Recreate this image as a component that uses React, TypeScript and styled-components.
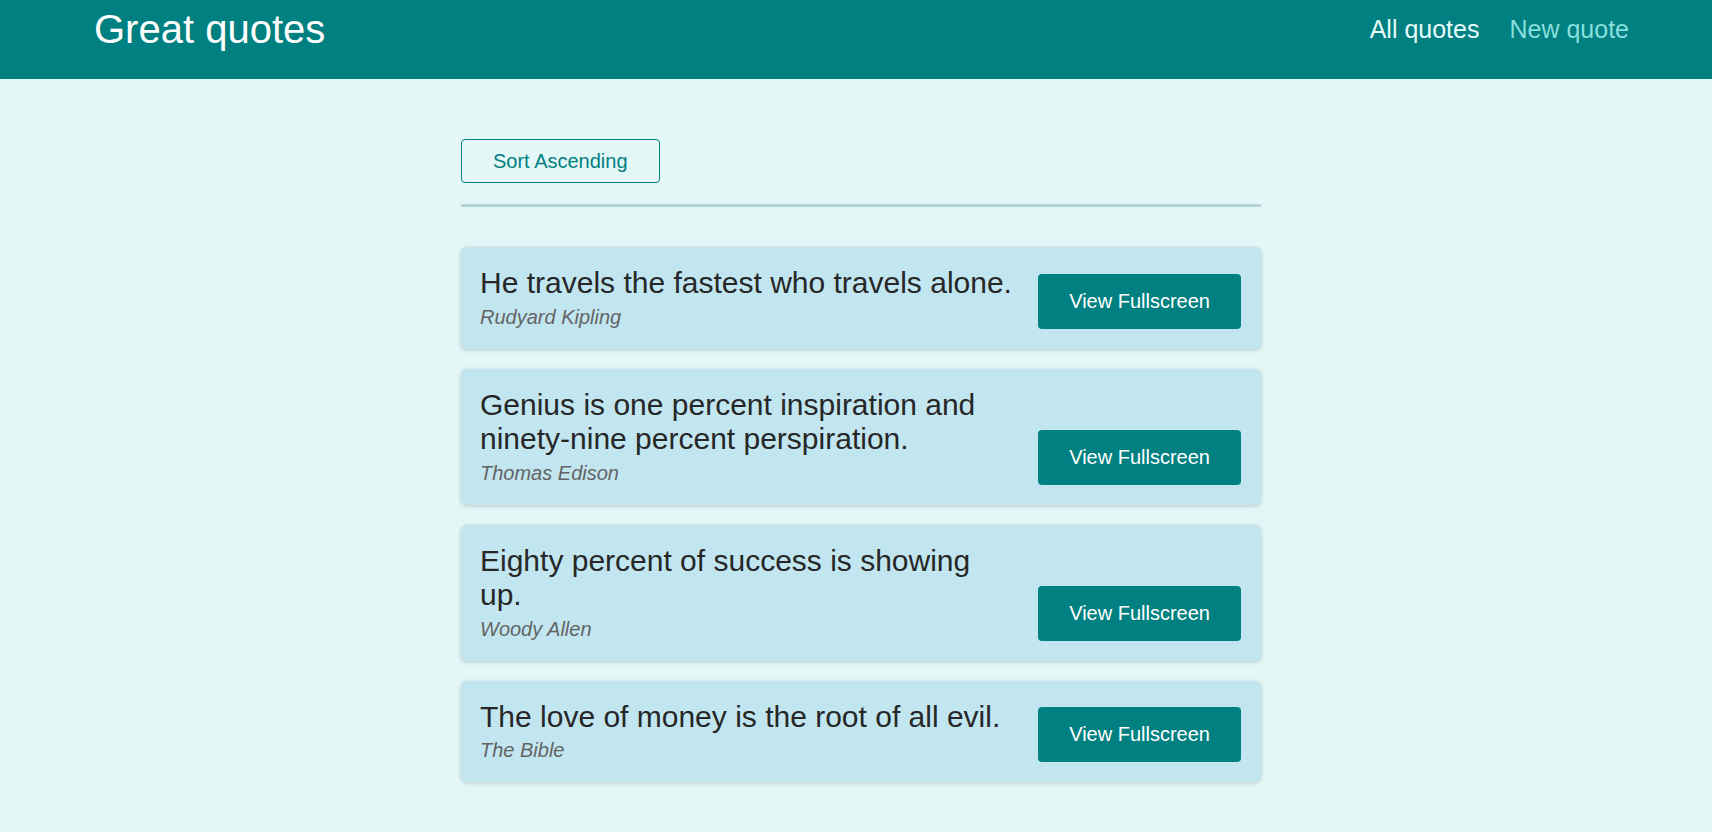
import React from "react";
import styled, { createGlobalStyle } from "styled-components";

const GlobalStyle = createGlobalStyle`
  * { box-sizing: border-box; }
  html, body { margin: 0; padding: 0; }
  body {
    background: #e4f7f7;
    font-family: "Liberation Sans", Arial, sans-serif;
    min-height: 832px;
  }
`;

const Header = styled.header`
  height: 79px;
  background: #008080;
  display: flex;
  justify-content: space-between;
  align-items: flex-start;
  padding: 6px 83px 0 94px;
`;

const Logo = styled.div`
  font-size: 40px;
  line-height: 46px;
  color: #ffffff;
`;

const Nav = styled.nav`
  display: flex;
  gap: 30px;
  margin-top: 9px;
`;

const NavLink = styled.a<{ $active?: boolean }>`
  font-size: 25px;
  line-height: 29px;
  text-decoration: none;
  color: ${(p) => (p.$active ? "#e6fcfc" : "#88dfdf")};
  cursor: pointer;
`;

const Main = styled.main`
  width: 810px;
  margin: 0 auto;
  padding: 60px 0 49px 10px;
  display: flex;
  flex-direction: column;
`;

const Sorting = styled.div`
  padding-bottom: 21px;
  border-bottom: 3px solid #b2d4d6;
  margin-bottom: 40px;
`;

const SortButton = styled.button`
  font-family: inherit;
  font-size: 20px;
  line-height: 23px;
  padding: 9.5px 31px;
  background: transparent;
  color: #008080;
  border: 1px solid #008080;
  border-radius: 4px;
  cursor: pointer;
`;

const List = styled.ul`
  list-style: none;
  margin: 0;
  padding: 0;
  display: flex;
  flex-direction: column;
  gap: 20px;
`;

const Card = styled.li`
  display: flex;
  align-items: flex-end;
  gap: 23px;
  background: #c2e6f0;
  border-radius: 6px;
  box-shadow: 0 1px 4px rgba(0, 0, 0, 0.2);
  padding: 19px 20px 20px 19px;
`;

const Figure = styled.figure`
  flex: 1;
  min-width: 0;
  margin: 0;
`;

const Quote = styled.blockquote`
  margin: 0 0 5px 0;
  font-size: 30px;
  line-height: 34.5px;
  color: #272727;
`;

const Author = styled.figcaption`
  font-size: 20px;
  line-height: 23px;
  font-style: italic;
  color: #646464;
`;

const ViewButton = styled.a`
  flex: none;
  font-size: 20px;
  line-height: 23px;
  padding: 16px 31px;
  background: #008080;
  color: #ffffff;
  border-radius: 4px;
  text-decoration: none;
  cursor: pointer;
`;

const quotes = [
  { id: "q1", text: "He travels the fastest who travels alone.", author: "Rudyard Kipling" },
  { id: "q2", text: "Genius is one percent inspiration and ninety-nine percent perspiration.", author: "Thomas Edison" },
  { id: "q3", text: "Eighty percent of success is showing up.", author: "Woody Allen" },
  { id: "q4", text: "The love of money is the root of all evil.", author: "The Bible" },
];

export default function App() {
  return (
    <>
      <GlobalStyle />
      <Header>
        <Logo>Great quotes</Logo>
        <Nav>
          <NavLink $active>All quotes</NavLink>
          <NavLink>New quote</NavLink>
        </Nav>
      </Header>
      <Main>
        <Sorting>
          <SortButton>Sort Ascending</SortButton>
        </Sorting>
        <List>
          {quotes.map((q) => (
            <Card key={q.id}>
              <Figure>
                <Quote>{q.text}</Quote>
                <Author>{q.author}</Author>
              </Figure>
              <ViewButton>View Fullscreen</ViewButton>
            </Card>
          ))}
        </List>
      </Main>
    </>
  );
}
